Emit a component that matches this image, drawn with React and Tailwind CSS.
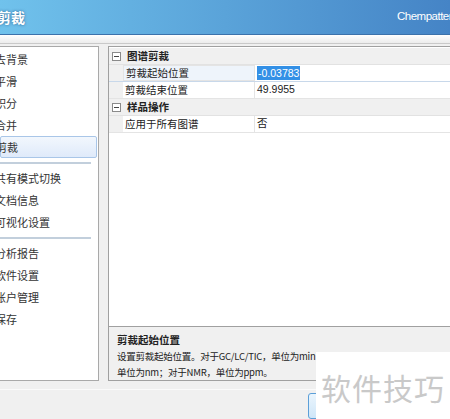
import React from 'react';

const FONT = { fontFamily: '"Noto Sans CJK SC", "Liberation Sans", sans-serif' };

// left nav groups, separated by thin rules
const navGroups = [
  ['去背景', '平滑', '积分', '合并', '剪裁'],
  ['共有模式切换', '文档信息', '可视化设置'],
  ['分析报告', '软件设置', '账户管理', '保存'],
];

function CollapseBox() {
  return (
    <span className="flex items-center justify-center w-[9px] h-[9px] border border-[#8a8a8a] bg-white">
      <span className="block w-[5px] h-px bg-[#444]" />
    </span>
  );
}

function CategoryRow({ label }) {
  return (
    <div className="flex h-[17px] bg-[#f0f0f0] border-b border-[#e2e2e2]">
      <div className="w-[14px] flex items-center justify-center">
        <CollapseBox />
      </div>
      <div className="pl-[4px] flex items-center text-[10.5px] font-bold text-[#222]">{label}</div>
    </div>
  );
}

function PropRow({ name, value, selected }) {
  return (
    <div className={`flex h-[17px] border-b ${selected ? 'border-[#c8d8ea]' : 'border-[#e4e4e4]'}`}>
      <div className="w-[14px] bg-[#f0f0f0]" />
      <div
        className={`w-[132px] flex items-center pl-[2px] text-[10.5px] text-[#222] border-r border-[#e4e4e4] ${
          selected ? 'bg-[#eef4fb] border border-[#b6cde6]' : ''
        }`}
      >
        {name}
      </div>
      <div className="flex-1 flex items-center pl-[2px] text-[10.5px] text-[#222]" style={{ fontFamily: '"Liberation Sans", "Noto Sans CJK SC", sans-serif' }}>
        {selected ? <span className="bg-[#3390e6] text-white px-[1px] leading-[14px]">{value}</span> : value}
      </div>
    </div>
  );
}

export default function App() {
  return (
    <div className="relative w-[450px] h-[419px] overflow-hidden bg-[#f0f0f0]" style={FONT}>
      {/* window title */}
      <div className="h-[35px] flex items-center justify-between bg-gradient-to-r from-[#70c2ec] via-[#5aa3d9] to-[#4584c6] border-b border-[#3c72ab]">
        <span className="ml-[-3px] text-[14px] font-bold text-white [text-shadow:0_0_3px_rgba(0,40,90,0.6)]">剪裁</span>
        <span
          className="w-[53px] overflow-hidden whitespace-nowrap text-[11.5px] tracking-[-0.5px] text-white"
          style={{ fontFamily: '"Liberation Sans", sans-serif' }}
        >
          Chempattern
        </span>
      </div>
      <div className="h-[9px] bg-gradient-to-b from-white to-[#ececec] border-b border-[#c9c9c9]" />

      <div className="flex pt-[2px]">
        {/* navigation list */}
        <div className="w-[99px] h-[335px] bg-white border-r border-b border-t border-[#a9a9a9] pt-[1px] pr-[1px] text-[11px] text-[#333]">
          {navGroups.map((group, gi) => (
            <div key={gi}>
              {gi > 0 && (
                <div className="h-[9px] flex items-center">
                  <div className="w-[91px] h-[2px] bg-[#c2cfdc]" />
                </div>
              )}
              {group.map((item) => (
                <div
                  key={item}
                  className={`h-[22px] flex items-center ${
                    item === '剪裁' ? 'bg-gradient-to-b from-[#f2f7fd] to-[#dfeafa] border border-[#a9c6e8] rounded-[2px]' : ''
                  }`}
                >
                  <span className="ml-[-5px]">{item}</span>
                </div>
              ))}
            </div>
          ))}
        </div>

        {/* property grid + description */}
        <div className="ml-[9px] flex-1 flex flex-col">
          <div className="h-[280px] bg-white border-t border-l border-[#a0a0a0] pt-px">
            <CategoryRow label="图谱剪裁" />
            <PropRow name="剪裁起始位置" value="-0.03783" selected />
            <PropRow name="剪裁结束位置" value="49.9955" />
            <CategoryRow label="样品操作" />
            <PropRow name="应用于所有图谱" value="否" />
          </div>
          <div className="h-[55px] bg-[#f0f0f0] border-l border-b border-t border-[#a0a0a0] pl-[8px] pt-[5px] text-[9.5px] text-[#222] leading-[16px] tracking-[-0.25px]">
            <div className="font-bold text-[10.5px] tracking-normal">剪裁起始位置</div>
            <div className="whitespace-nowrap">设置剪裁起始位置。对于GC/LC/TIC，单位为min；对于UV，</div>
            <div className="whitespace-nowrap">单位为nm；对于NMR，单位为ppm。</div>
          </div>
        </div>
      </div>

      {/* footer with dialog buttons */}
      <div className="mt-[8px] border-t border-[#fafafa] h-[30px] pl-[308px] pt-[3px]">
        <div className="w-[70px] h-[26px] rounded-[3px] border border-[#5c9fd8] bg-gradient-to-b from-[#eaf5fd] to-[#cfe6f8]" />
      </div>

      {/* site watermark */}
      <div className="absolute left-[316px] top-[352px] w-[140px] h-[70px] bg-white flex items-center pl-[5px]">
        <span className="text-[30px] text-[#c9c9c9] tracking-[1px]">软件技巧</span>
      </div>
    </div>
  );
}
